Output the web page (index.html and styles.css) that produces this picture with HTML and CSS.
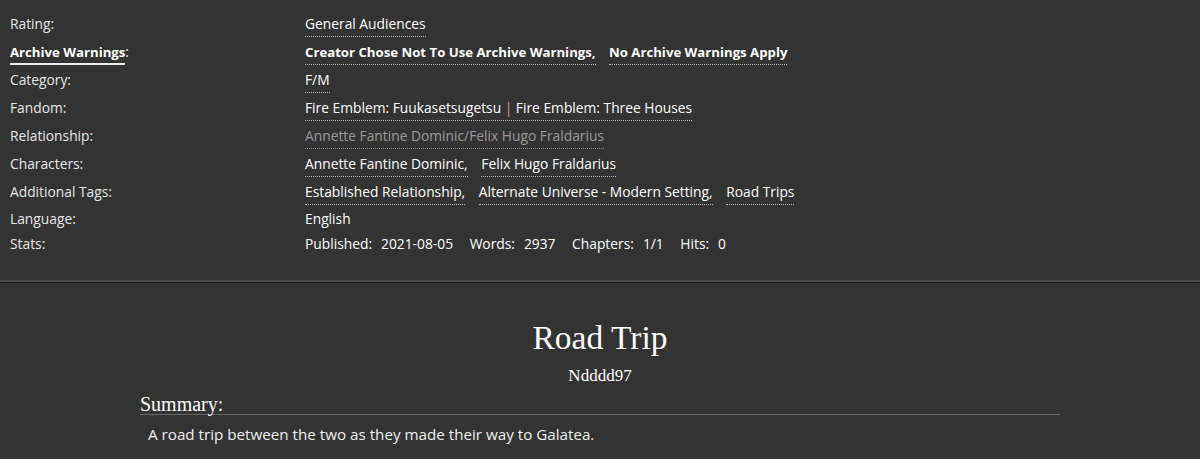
FILE: index.html
```html
<!DOCTYPE html>
<html lang="en">
<head>
    <meta charset="UTF-8">
    <title>Road Trip</title>
    <link rel="stylesheet" href="styles.css">
</head>
<body>
    <div class="meta">
        <div class="row">
            <div class="label">Rating:</div>
            <div class="value"><a class="tag">General Audiences</a></div>
        </div>
        <div class="row">
            <div class="label"><span class="help">Archive Warnings</span>:</div>
            <div class="value bold">
                <a class="tag">Creator Chose Not To Use Archive Warnings,</a>
                <a class="tag">No Archive Warnings Apply</a>
            </div>
        </div>
        <div class="row">
            <div class="label">Category:</div>
            <div class="value"><a class="tag">F/M</a></div>
        </div>
        <div class="row">
            <div class="label">Fandom:</div>
            <div class="value"><a class="tag">Fire Emblem: Fuukasetsugetsu <span class="sep">|</span> Fire Emblem: Three Houses</a></div>
        </div>
        <div class="row">
            <div class="label">Relationship:</div>
            <div class="value"><a class="tag visited">Annette Fantine Dominic/Felix Hugo Fraldarius</a></div>
        </div>
        <div class="row">
            <div class="label">Characters:</div>
            <div class="value">
                <a class="tag">Annette Fantine Dominic,</a>
                <a class="tag">Felix Hugo Fraldarius</a>
            </div>
        </div>
        <div class="row">
            <div class="label">Additional Tags:</div>
            <div class="value">
                <a class="tag">Established Relationship,</a>
                <a class="tag">Alternate Universe - Modern Setting,</a>
                <a class="tag">Road Trips</a>
            </div>
        </div>
        <div class="row short">
            <div class="label">Language:</div>
            <div class="value">English</div>
        </div>
        <div class="row short">
            <div class="label">Stats:</div>
            <div class="value stats">
                <span>Published:</span><span class="num">2021-08-05</span>
                <span>Words:</span><span class="num">2937</span>
                <span>Chapters:</span><span class="num">1/1</span>
                <span>Hits:</span><span class="num">0</span>
            </div>
        </div>
    </div>
    <!-- work preface -->
    <div class="preface">
        <h2 class="title">Road Trip</h2>
        <h3 class="byline">Ndddd97</h3>
        <div class="summary">
            <h3>Summary:</h3>
            <p>A road trip between the two as they made their way to Galatea.</p>
        </div>
    </div>
</body>
</html>
```

FILE: styles.css
```css
body{
    margin: 0;
    background-color: #333;
    color: #e6e6e6;
    font-family: "Open Sans", "DejaVu Sans", sans-serif;
    font-size: 13.8px;
}
.meta{
    padding: 10px 0 0 10px;
    height: 270px;
    border-bottom: 2px solid #4a4a4a;
    box-shadow: 0 1px 0 #1a1a1a;
}
.row{
    display: flex;
    height: 28px;
}
.row.short{
    height: 25px;
}
.label{
    width: 295px;
    line-height: 28px;
    color: #e6e6e6;
}
.short .label, .short .value{
    line-height: 25px;
}
.bold{
    font-weight: bold;
    font-size: 13.2px;
}
.help{
    font-weight: bold;
    font-size: 13.2px;
    color: #fff;
    border-bottom: 2px solid #eee;
    padding-bottom: 2px;
}
.value{
    line-height: 28px;
    color: #fff;
}
.tag{
    color: #fff;
    border-bottom: 1px dotted #bbb;
    padding-bottom: 3px;
    margin-right: 10px;
}
.tag.visited{
    color: #999;
    border-bottom-color: #888;
}
.sep{
    color: #e09090;
}
.stats .num{
    margin-left: 9px;
    margin-right: 13px;
}
.preface{
    margin: 0 140px;
    padding-top: 36px;
}
.title{
    font-family: "Liberation Serif", "DejaVu Serif", serif;
    font-weight: normal;
    font-size: 33.5px;
    text-align: center;
    color: #fff;
    margin: 0;
    line-height: 40px;
}
.byline{
    font-family: "Liberation Serif", "DejaVu Serif", serif;
    font-weight: normal;
    font-size: 17px;
    text-align: center;
    color: #fff;
    margin: 6px 0 0;
    line-height: 24px;
}
.summary h3{
    font-family: "Liberation Serif", "DejaVu Serif", serif;
    font-weight: normal;
    font-size: 20px;
    color: #fff;
    margin: 6px 0 0;
    line-height: 20px;
    border-bottom: 1px solid #666;
}
.summary p{
    margin: 9px 0 0 8px;
    font-size: 15.2px;
    color: #eee;
}
```
